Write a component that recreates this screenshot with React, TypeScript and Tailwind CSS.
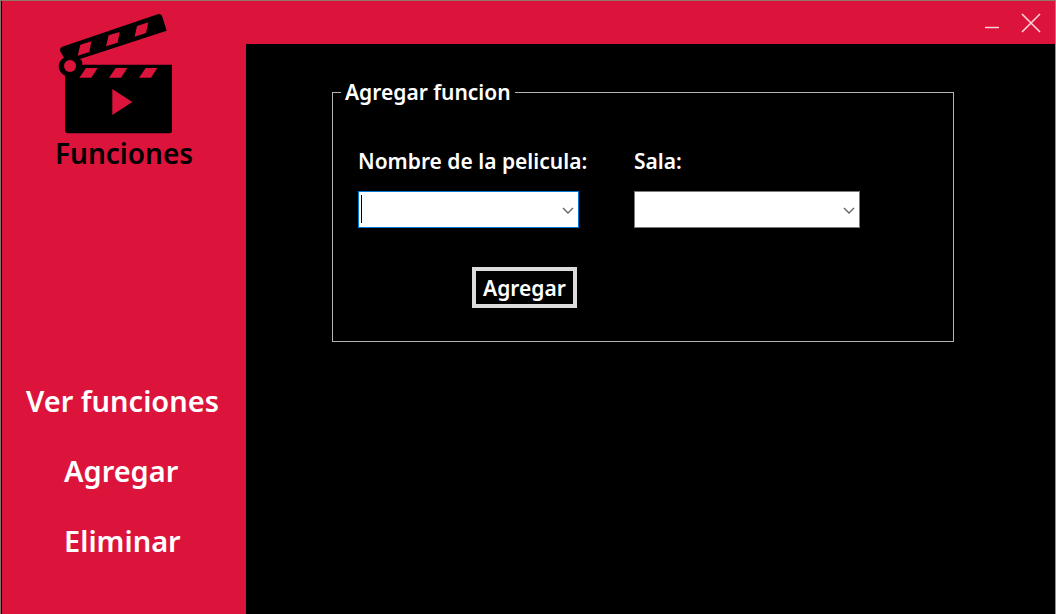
import { ReactNode } from "react";

function ClapperIcon() {
  return (
    <svg viewBox="51 36 345 369" className="h-[123px] w-[115px]" aria-hidden="true">
      <path d="M62 156Q56 145 67 140L353 43Q364 40 367 50L380 92L120 177Q130 184 126 194H397V390Q397 400 386 400H86Q75 400 75 390V227Q57 218 56 198Q57 181 72 173Z" fill="#000" />
      <g fill="#DC143C">
        <circle cx="90" cy="198" r="18" />
        <path d="M121 134L154 124L148 156L113 167ZM206 106L239 96L233 128L198 139ZM291 78L325 67L318 99L284 110Z" />
        <path d="M138 204H173L154 233H118ZM227 204H262L243 233H207ZM317 204H352L333 233H297Z" />
        <path d="M217 267L277 306L217 345Z" />
      </g>
    </svg>
  );
}

function NavButton({ children, className }: { children: ReactNode; className: string }) {
  return (
    <button type="button" className={`h-[70px] text-left text-[29px] leading-[70px] whitespace-nowrap text-white ${className}`}>
      {children}
    </button>
  );
}

function ComboBox({ id, label, className, active = false }: { id: string; label: string; className: string; active?: boolean }) {
  return (
    <div className="flex flex-col items-start gap-4">
      <label htmlFor={id} className="text-[21px] leading-7 whitespace-nowrap">
        {label}
      </label>
      <div className={`relative h-[37px] ${className}`}>
        <select
          id={id}
          defaultValue=""
          className={`h-full w-full appearance-none border bg-white px-2 text-black outline-none ${active ? "border-[#0078D7]" : "border-[#7A7A7A]"}`}
        >
          <option value=""></option>
        </select>
        {active && <span aria-hidden="true" className="pointer-events-none absolute top-1 left-[3px] h-7 w-px bg-black" />}
        <svg viewBox="0 0 12 8" className="pointer-events-none absolute top-4 right-[5px] h-2 w-3" fill="none" stroke="#666" strokeWidth="1.4" aria-hidden="true">
          <path d="M1 1L6 6L11 1" />
        </svg>
      </div>
    </div>
  );
}

export default function App() {
  return (
    <div className="flex min-h-screen border-t border-r border-l border-t-[#8d7964] border-r-[#c08a50] border-l-[#85776c] bg-black font-['Noto_Sans',sans-serif] font-semibold text-white">
      <aside className="flex w-[245px] shrink-0 flex-col border-l border-black bg-[#DC143C]">
        <div className="flex flex-col items-start pt-[11px]">
          <div className="pl-[55px]">
            <ClapperIcon />
          </div>
          <h1 className="pl-[53px] text-[28px] leading-9 font-semibold text-black">Funciones</h1>
        </div>
        <nav className="mt-[195px] flex flex-col items-start">
          <NavButton className="pl-6">Ver funciones</NavButton>
          <NavButton className="pl-[62px]">Agregar</NavButton>
          <NavButton className="pl-[62px]">Eliminar</NavButton>
        </nav>
      </aside>
      <div className="flex min-w-0 grow flex-col">
        <header className="flex h-[43px] items-center justify-end gap-3 bg-[#DC143C] pr-[13px]">
          <button type="button" aria-label="Minimizar" className="p-1">
            <svg viewBox="0 0 24 24" className="h-6 w-6" stroke="#fbd5dd" strokeWidth="1.4" aria-hidden="true">
              <path d="M5 16.5H19" />
            </svg>
          </button>
          <button type="button" aria-label="Cerrar">
            <svg viewBox="0 0 22 22" className="h-[22px] w-[22px]" stroke="#fbd5dd" strokeWidth="1.6" aria-hidden="true">
              <path d="M2 2L20 20M20 2L2 20" />
            </svg>
          </button>
        </header>
        <main className="pt-[33px] pr-[101px] pl-[86px]">
          <fieldset className="h-[265px] border border-[#b4b4b4] px-[25px]">
            <legend className="-ml-[17px] px-1 text-[21px] leading-[30px]">Agregar funcion</legend>
            <div className="grid grid-cols-[230px_226px] gap-[46px] pt-10">
              <ComboBox id="pelicula" label="Nombre de la pelicula:" className="w-[221px]" active />
              <ComboBox id="sala" label="Sala:" className="w-[226px]" />
            </div>
            <button type="button" className="mt-[39px] ml-[114px] h-[41px] w-[105px] border-4 border-[#dcdcdc] text-[21px] leading-7">
              Agregar
            </button>
          </fieldset>
        </main>
      </div>
    </div>
  );
}
